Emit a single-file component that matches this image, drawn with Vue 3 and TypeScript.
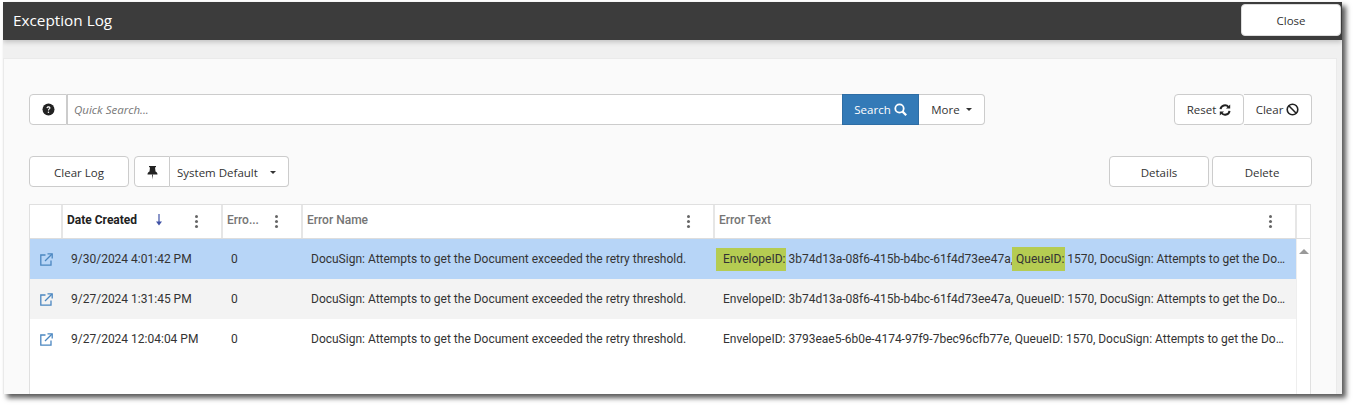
<script setup lang="ts">
interface Row { date: string; env: string; rowClass: string; mark: boolean }
const rows: Row[] = [
  { date: '9/30/2024 4:01:42 PM', env: '3b74d13a-08f6-415b-b4bc-61f4d73ee47a', rowClass: 'sel', mark: true },
  { date: '9/27/2024 1:31:45 PM', env: '3b74d13a-08f6-415b-b4bc-61f4d73ee47a', rowClass: 'alt', mark: false },
  { date: '9/27/2024 12:04:04 PM', env: '3793eae5-6b0e-4174-97f9-7bec96cfb77e', rowClass: '', mark: false }
]
const errName = 'DocuSign: Attempts to get the Document exceeded the retry threshold.'
const tail = ' 1570, DocuSign: Attempts to get the Document exceeded the retry threshold.'
</script>

<template>
  <div class="page">
    <div class="window">
      <header class="titlebar">
        <span class="title">Exception Log</span>
        <button class="btn close">Close</button>
      </header>
      <main class="panel">
        <div class="search-row">
          <button class="btn help" aria-label="Help">
            <svg width="13" height="13" viewBox="0 0 13 13"><circle cx="6.5" cy="6.5" r="6" fill="#222" /><path d="M4.5 5.1c0-1.2.9-1.8 2-1.8s2 .6 2 1.6c0 1.400-1.600 1.300-1.600 2.600H5.900c0-1.800 1.500-1.800 1.500-2.500 0-.4-.4-.6-.9-.6s-.9.3-.9.8z" fill="#fff" /><rect x="5.800" y="8.600" width="1.300" height="1.300" fill="#fff" /></svg>
          </button>
          <input class="quick" type="text" placeholder="Quick Search..." />
          <button class="btn search">Search
            <svg width="13" height="13" viewBox="0 0 13 13" fill="none" stroke="#fff"><circle cx="5.500" cy="5.500" r="4.200" stroke-width="1.800" /><path d="M8.600 8.600l3.600 3.600" stroke-width="2.200" /></svg>
          </button>
          <button class="btn more">More <i class="caret"></i></button>
          <span class="spacer"></span>
          <button class="btn reset">Reset
            <svg width="12" height="12" viewBox="0 0 12 12" fill="none" stroke="#222" stroke-width="2"><path d="M1.500 5.200a4.500 4.500 0 0 1 8-2.200" /><path d="M10.500 6.800a4.500 4.500 0 0 1-8 2.200" /><path d="M11.200.4v4.200H7z" fill="#222" stroke="none" /><path d="M.8 11.600V7.400H5z" fill="#222" stroke="none" /></svg>
          </button>
          <button class="btn clear">Clear
            <svg width="13" height="13" viewBox="0 0 13 13" fill="none" stroke="#222" stroke-width="1.600"><circle cx="6.500" cy="6.500" r="5.300" /><path d="M2.800 2.800l7.400 7.400" /></svg>
          </button>
        </div>
        <div class="action-row">
          <button class="btn clear-log">Clear Log</button>
          <div class="layout-group">
            <button class="btn pin" aria-label="Pin">
              <svg width="11" height="14" viewBox="0 0 11 14" fill="#222"><path d="M2 0h7v1.200H8L8.500 5.500C9.800 6.200 10.500 7.200 10.500 8.500H.5C.5 7.200 1.200 6.200 2.500 5.500L3 1.200H2z" /><path d="M5 8.500h1L5.500 13.500z" /></svg>
            </button>
            <button class="btn layout">System Default <i class="caret"></i></button>
          </div>
          <span class="spacer"></span>
          <button class="btn details">Details</button>
          <button class="btn delete">Delete</button>
        </div>
        <section class="grid">
          <div class="head">
            <div class="hc"></div>
            <div class="hc date">
              <b>Date Created</b>
              <svg class="sort" width="8" height="12" viewBox="0 0 8 12"><path d="M4 0v10" stroke="#3f51a5" stroke-width="1.200" /><path d="M1 7.500h6L4 11.500z" fill="#3f51a5" /></svg>
              <i class="dots"></i>
            </div>
            <div class="hc num"><span>Erro...</span><i class="dots"></i></div>
            <div class="hc name"><span>Error Name</span><i class="dots"></i></div>
            <div class="hc text"><span>Error Text</span><i class="dots"></i></div>
            <div class="hc scroll-head"></div>
          </div>
          <div class="body">
            <div class="rows">
              <div v-for="r in rows" :key="r.date" class="row" :class="r.rowClass">
                <div class="cell link">
                  <svg width="13" height="13" viewBox="0 0 13 13" fill="none" stroke="#4a86c0" stroke-width="1.300"><path d="M5.500 2H.8v10.200H11V7.500" /><path d="M5 8L11.800 1.200" /><path d="M7.500.8h4.700v4.700" /></svg>
                </div>
                <div class="cell c-date">{{ r.date }}</div>
                <div class="cell c-num">0</div>
                <div class="cell c-name">{{ errName }}</div>
                <div class="cell c-text">
                  <div class="clip"><span :class="{ mark: r.mark, first: r.mark }">EnvelopeID:</span> {{ r.env }}, <span :class="{ mark: r.mark, second: r.mark }">QueueID:</span>{{ tail }}</div>
                </div>
              </div>
            </div>
            <div class="scrollbar"><i></i></div>
          </div>
        </section>
      </main>
    </div>
  </div>
</template>

<style>
html, body { margin: 0; background: #fff; }
</style>

<style scoped>
.page {
  box-sizing: border-box;
  height: 409px;
  padding: 2px 0 0 3px;
  overflow: hidden;
}
.window {
  box-sizing: border-box;
  width: 1339px;
  height: 392px;
  background: #f0f0f0;
  box-shadow: 4px 4px 5px rgba(0, 0, 0, .65);
  overflow: hidden;
  font-family: "Open Sans", "Liberation Sans", sans-serif;
  display: flex;
  flex-direction: column;
}
.titlebar {
  flex: none;
  box-sizing: border-box;
  height: 38px;
  background: #3c3c3c;
  padding: 2px 1px 0 10px;
  display: flex;
  justify-content: space-between;
  align-items: flex-start;
  box-shadow: 0 2px 5px rgba(0, 0, 0, .2);
  position: relative;
}
.title { color: #fff; font-size: 15.300px; line-height: 37px; margin-top: -2px; }
.btn {
  box-sizing: border-box;
  height: 31px;
  padding: 0;
  margin: 0;
  background: #fff;
  border: 1px solid #ccc;
  border-radius: 4px;
  color: #333;
  font: 11.500px "Open Sans", "Liberation Sans", sans-serif;
  display: inline-flex;
  align-items: center;
  justify-content: center;
  flex: none;
}
.close { width: 100px; height: 32px; border-color: #ddd; }
.panel {
  flex: 1;
  margin: 18px 5px 0 0;
  background: #fafafa;
  border: 1px solid #eaeaea;
  border-width: 1px 1px 0 1px;
  padding: 35px 24px 0 25px;
  display: flex;
  flex-direction: column;
  min-height: 0;
}
.search-row, .action-row { display: flex; align-items: center; height: 31px; flex: none; }
.action-row { margin-top: 31px; }
.action-row .btn { padding-top: 2px; }
.spacer { flex: 1; }
.help { width: 38px; border-radius: 4px 0 0 4px; }
.quick {
  box-sizing: border-box;
  width: 775px;
  height: 31px;
  border: 1px solid #ccc;
  border-left-width: 1px;
  border-right: 0;
  margin: 0;
  padding: 0 6px;
  background: #fff;
  outline: none;
  font: italic 11.500px "Open Sans", "Liberation Sans", sans-serif;
  color: #333;
}
.quick::placeholder { color: #777; opacity: 1; }
.search {
  width: 77px;
  background: #337ab7;
  border-color: #2e6da4;
  border-radius: 0;
  color: #fff;
  gap: 3px;
}
.more { width: 66px; border-left: 0; border-radius: 0 4px 4px 0; gap: 6px; }
.caret {
  display: inline-block;
  width: 0;
  height: 0;
  border-top: 3.500px solid #333;
  border-left: 3.500px solid transparent;
  border-right: 3.500px solid transparent;
}
.reset { width: 70px; gap: 3px; border-radius: 4px; }
.clear { width: 68px; gap: 3px; border-left: 0; border-radius: 0 4px 4px 0; }
.clear-log { width: 100px; }
.layout-group { display: flex; margin-left: 5px; }
.pin { width: 36px; border-radius: 4px 0 0 4px; }
.layout { width: 119px; border-left: 0; border-radius: 0 4px 4px 0; justify-content: flex-start; padding-left: 7px; gap: 12px; }
.details { width: 100px; }
.delete { width: 100px; margin-left: 3px; }

.grid {
  flex: 1;
  margin-top: 17px;
  background: #fff;
  border: 1px solid #e0e0e0;
  border-bottom: 0;
  margin-right: 1px;
  min-height: 0;
  font-family: Roboto, "Liberation Sans", sans-serif;
  font-size: 12px;
  color: #333;
}
.head {
  display: grid;
  grid-template-columns: 33px 160px 80px 412px 582px 1fr;
  height: 34px;
  border-bottom: 1px solid #ddd;
  box-sizing: border-box;
}
.hc {
  box-sizing: border-box;
  border-right: 2px solid #e6e6e6;
  display: flex;
  align-items: center;
  padding: 0 5px;
  position: relative;
  font-weight: 500;
  color: #757575;
  padding-bottom: 4px;
}
.hc.date { padding-left: 4px; color: #212121; }
.hc.date b { font-weight: 700; }
.hc.num { padding-left: 4px; }
.hc.name { padding-left: 4px; }
.hc.text { padding-left: 4px; }
.sort { position: absolute; left: 92px; top: 9px; }
.dots {
  position: absolute;
  right: 23px;
  top: 10px;
  width: 3px;
  height: 3px;
  border-radius: 50%;
  background: #666;
  box-shadow: 0 5px 0 #666, 0 10px 0 #666;
}
.scroll-head { border-right: 0; }
.body { display: flex; height: 160px; }
.rows { width: 1266px; flex: none; }
.scrollbar { flex: 1; border-left: 1px solid #eee; position: relative; background: #fff; }
.scrollbar i {
  position: absolute;
  left: 2px;
  top: 10px;
  width: 0;
  height: 0;
  border-bottom: 5px solid #999;
  border-left: 5px solid transparent;
  border-right: 5px solid transparent;
}
.row {
  display: grid;
  grid-template-columns: 32px 160px 80px 413px 581px;
  height: 40px;
  align-items: center;
}
.row.sel { background: #b7d5f7; }
.row.alt { background: #f3f3f3; }
.cell { white-space: nowrap; overflow: hidden; color: #333; box-sizing: border-box; }
.link { display: flex; padding-left: 10px; padding-top: 0; }
.c-date, .c-num, .c-name { padding-left: 9px; }
.c-text { padding-left: 1px; overflow: visible; }
.clip {
  box-sizing: border-box;
  width: 570px;
  padding-left: 7px;
  overflow: hidden;
  text-overflow: ellipsis;
  white-space: nowrap;
  height: 40px;
  line-height: 40px;
}
.mark { background: #b5cc52; padding: 4px 1px 5px 0; margin-right: -1px; }
.first { padding-left: 7px; margin-left: -7px; }
.second { padding-left: 4px; margin-left: -4px; padding-top: 5px; }
</style>
